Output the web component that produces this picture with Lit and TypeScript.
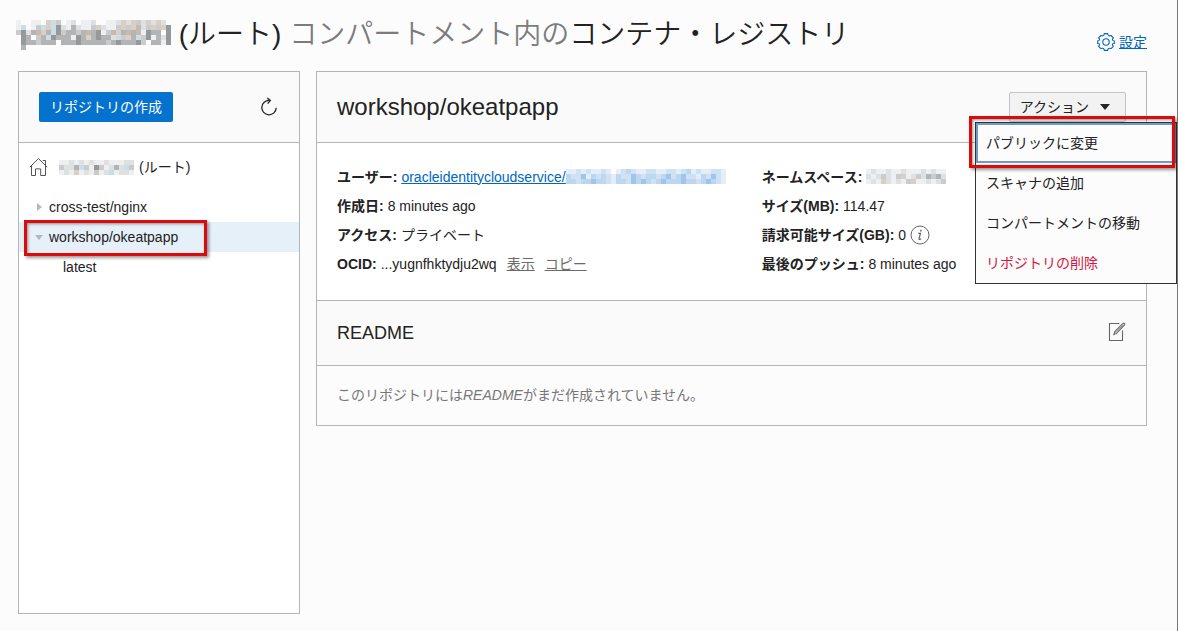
import { LitElement, html, css, svg } from "lit";
import { customElement, property, state } from "lit/decorators.js";

const TINTS: Record<string, string> = {
  "1": "#eeeff0", "2": "#dfe0e1", "3": "#cacbcd", "4": "#b2b4b6", "5": "#96999c",
  b: "#cddde6", t: "#dacfc5", p: "#c6b9ae",
  k: "#e3eef9", l: "#cfe1f4", m: "#bdd7f0", n: "#a0c5e9",
};

/** A pixelated block that stands in for a private value. */
@customElement("masked-text")
export class MaskedText extends LitElement {
  @property({ attribute: false }) rows: string[] = [];

  static styles = css`
    :host { display: inline-block; vertical-align: middle; line-height: 0; }
  `;

  render() {
    const cell = 5;
    const w = Math.max(...this.rows.map((r) => r.length)) * cell;
    const h = this.rows.length * cell;
    return html`<svg width=${w} height=${h} viewBox="0 0 ${w} ${h}" role="img" aria-label="非表示" shape-rendering="crispEdges">
      ${this.rows.map((row, y) =>
        [...row].map((c, x) =>
          TINTS[c] ? svg`<rect x=${x * cell} y=${y * cell} width=${cell} height=${cell} fill=${TINTS[c]}></rect>` : null
        )
      )}
    </svg>`;
  }
}

const TITLE_MASK = [
  "1..11.tb3.12.112..112t2t32t2t2.",
  "1b.13btb52142113t2113t3tp23t3t5",
  "3524pt4b534434p4513pt4p4p1544.5",
  ".54.34b5444154t45442b3t4b351425",
  ".5443444.44454444434544453.4415",
  ".4.............................",
];
const TREE_MASK = ["112121211211122", "3224b31531242b3", "121t121312b1221"];
const LINK_MASK = [
  "kklklkklk.klmlkkllkkllklmklkkllk",
  "mllnkmlmlkmllnmlmmlmnlmnllkmlnlk",
  "mmlmmnmmlkmmlnmnmlmnmmmnmmlmnmlk",
];
const NS_MASK = ["1211211211121211", "2123213t12324342", "121t21213t112123"];

@customElement("app-root")
export class AppRoot extends LitElement {
  @state() private menuOpen = true;

  static styles = css`
    :host {
      display: block;
      font: 14px/20px "Liberation Sans", "Noto Sans CJK JP", sans-serif;
      color: #222;
    }
    * { box-sizing: border-box; }
    h1, h2, h3, p, ul, dl, dd { margin: 0; padding: 0; }
    ul { list-style: none; }
    button { font: inherit; color: inherit; cursor: pointer; }
    svg { display: block; flex: none; }
    .page {
      min-height: 100vh;
      display: flex;
      flex-direction: column;
      gap: 16px;
      padding: 15px 30px 17px 18px;
      background: #fcfcfc;
      border-right: 1px solid #777;
      overflow: hidden;
    }
    .top { display: flex; justify-content: space-between; align-items: flex-end; }
    .title { font-size: 28px; line-height: 40px; font-weight: 350; margin-left: -2px; }
    .title masked-text { margin-bottom: 4px; }
    .scope { color: #7c7c7c; }
    .settings { display: flex; align-items: center; gap: 4px; line-height: 26px; color: #0066c0; }
    .settings span { text-decoration: underline; }
    .columns { flex: 1; display: grid; grid-template-columns: 282px minmax(0, 1fr); gap: 16px; }
    .panel { border: 1px solid #b3b5b9; background: #fff; }
    .bar {
      display: flex;
      justify-content: space-between;
      align-items: center;
      padding: 20px;
      background: #fafafa;
      border-bottom: 1px solid #b3b5b9;
    }
    .create {
      height: 30px;
      padding: 0 11px;
      border: 0;
      border-radius: 2px;
      background: #0572ce;
      color: #fff;
    }
    .icon { display: block; padding: 0; border: 0; background: none; }
    .home { display: flex; align-items: center; padding: 14px 10px 15px; gap: 11px; }
    .home span { display: flex; align-items: center; gap: 5px; }
    .node {
      position: relative;
      display: flex;
      align-items: center;
      gap: 6px;
      width: 100%;
      height: 30px;
      padding: 0 16px;
      border: 0;
      background: none;
      text-align: left;
    }
    .current { background: #e6f0f9; }
    .leaf { padding-left: 44px; }
    .mark {
      position: absolute;
      border: 3px solid #dc0a0a;
      box-shadow: 2px 2px 3px #0006, inset 1px 1px 3px #0006;
      pointer-events: none;
    }
    .mark-node { inset: -2px 92px -4px 5px; }
    .detail { align-self: start; }
    .name { font-size: 24px; line-height: 30px; font-weight: 400; }
    .facts { display: grid; grid-template-columns: 10fr 9fr; gap: 20px; padding: 19px 20px 22px; }
    .fact { display: flex; align-items: center; gap: 4px; height: 29px; white-space: nowrap; }
    .fact dt { font-weight: 700; }
    .fact dd { display: flex; align-items: center; gap: 4px; }
    .fact a { color: #0066c0; }
    .fact .user { display: flex; align-items: center; }
    .fact .ocid { gap: 10px; }
    .fact .minor { color: #6b6b6b; }
    .actions { position: relative; }
    .toggle {
      display: flex;
      align-items: center;
      gap: 11px;
      height: 30px;
      padding: 0 15px 0 10px;
      border: 1px solid #c4c4c4;
      border-radius: 2px;
      background: #f2f2f2;
    }
    .menu {
      position: absolute;
      top: 30px;
      right: -51px;
      width: 202px;
      border: 1px solid #333;
      background: #fcfcfc;
    }
    .menu li { position: relative; }
    .item {
      display: block;
      width: 100%;
      height: 40px;
      padding: 0 10px;
      border: 0;
      background: none;
      text-align: left;
    }
    .focused { box-shadow: inset 0 0 0 2px #6f9cc6; }
    .danger { color: #d4183f; }
    .mark-item { inset: -7px 1px -5px -7px; }
    .readme { border-top: 1px solid #b3b5b9; }
    .readme h3 { font-size: 18px; line-height: 24px; font-weight: 400; }
    .empty { padding: 19px 20px 20px; background: #fcfcfc; color: #777; }
  `;

  private fact(label: string, value: unknown, cls = "") {
    return html`<div class="fact"><dt>${label}</dt><dd class=${cls}>${value}</dd></div>`;
  }

  render() {
    return html`
      <div class="page">
        <header class="top">
          <h1 class="title"><masked-text .rows=${TITLE_MASK}></masked-text> (ルート) <span class="scope">コンパートメント内の</span>コンテナ・レジストリ</h1>
          <a class="settings" href="#settings">
            <svg width="18" height="18" viewBox="0 0 18 18" fill="none" stroke="currentColor" stroke-width="1.1" stroke-linejoin="round">
              <path d="M6.4 2.6Q7.1 2.3 7.3.6h3.4q.2 1.7.9 2 1 .6 2.5-.1l2.3 2.4q-1.2 1.2-1 2.1.1.6 1.9.7v2.8q-1.7.1-1.9.7-.2.9 1 2.1l-2.3 2.3q-1.5-.7-2.5-.1-.7.3-.9 1.9H7.3q-.2-1.6-.9-1.9-1-.6-2.5.1L1.6 13.3q1.2-1.2 1-2.1-.1-.6-1.9-.7V7.700q1.800-.1 1.900-.7.2-.9-1-2.100l2.300-2.400q1.500.7 2.500.1z"/>
              <circle cx="9" cy="9" r="3.2"/>
            </svg><span>設定</span>
          </a>
        </header>

        <div class="columns">
          <nav class="panel" aria-label="リポジトリ">
            <div class="bar">
              <button class="create">リポジトリの作成</button>
              <button class="icon" aria-label="更新">
                <svg width="20" height="20" viewBox="0 0 20 20" fill="none" stroke="#222" stroke-width="1.3">
                  <path d="M10.5 3.4A7.2 7.2 0 1 0 17.2 10.8"/><path d="M8.1.9l3.3 2.5-2.7 3.3"/>
                </svg>
              </button>
            </div>
            <div class="home">
              <svg width="19" height="20" viewBox="0 0 19 20" fill="none" stroke="#555" stroke-width="1">
                <path d="M.8 10.2 9.5 1.6l8.7 8.6M2.5 8.7v9.8h4v-6.6h5.2v6.6h4.8V8.7M13.8 3.5h2.7v4.8"/>
              </svg>
              <span><masked-text .rows=${TREE_MASK}></masked-text>(ルート)</span>
            </div>
            <ul>
              <li><button class="node" aria-expanded="false">
                <svg width="8" height="8" viewBox="0 0 8 8" fill="#b8b8b8"><path d="M2 0l5 4-5 4z"/></svg>cross-test/nginx
              </button></li>
              <li><button class="node current" aria-expanded="true">
                <svg width="8" height="8" viewBox="0 0 8 8" fill="#b0b8be"><path d="M0 2h8L4 7z"/></svg>workshop/okeatpapp
                <span class="mark mark-node"></span>
              </button>
                <ul><li><button class="node leaf">latest</button></li></ul>
              </li>
            </ul>
          </nav>

          <main class="panel detail">
            <div class="bar">
              <h2 class="name">workshop/okeatpapp</h2>
              <div class="actions">
                <button class="toggle" aria-haspopup="menu" aria-expanded=${this.menuOpen} @click=${() => (this.menuOpen = !this.menuOpen)}>
                  アクション
                  <svg width="10" height="6" viewBox="0 0 10 6" fill="#222"><path d="M0 0h10L5 6z"/></svg>
                </button>
                ${this.menuOpen
                  ? html`<ul class="menu">
                      <li><button class="item focused">パブリックに変更</button><span class="mark mark-item"></span></li>
                      <li><button class="item">スキャナの追加</button></li>
                      <li><button class="item">コンパートメントの移動</button></li>
                      <li><button class="item danger">リポジトリの削除</button></li>
                    </ul>`
                  : null}
              </div>
            </div>
            <div class="facts">
              <dl>
                ${this.fact("ユーザー:", html`<a class="user" href="#user"><u>oracleidentitycloudservice/</u><masked-text .rows=${LINK_MASK}></masked-text></a>`)}
                ${this.fact("作成日:", "8 minutes ago")}
                ${this.fact("アクセス:", "プライベート")}
                ${this.fact("OCID:", html`<span>...yugnfhktydju2wq</span><a class="minor" href="#show">表示</a><a class="minor" href="#copy">コピー</a>`, "ocid")}
              </dl>
              <dl>
                ${this.fact("ネームスペース:", html`<masked-text .rows=${NS_MASK}></masked-text>`)}
                ${this.fact("サイズ(MB):", "114.47")}
                ${this.fact("請求可能サイズ(GB):", html`0
                  <svg width="20" height="20" viewBox="0 0 20 20" fill="none" stroke="#666">
                    <circle cx="10" cy="10" r="9"/><path d="M8.2 8.4h2.3L9 13.6q-.2 1 .8.8l1.3-.7" stroke-width="1.2"/><circle cx="10.8" cy="5.7" r=".9" fill="#666" stroke="none"/>
                  </svg>`)}
                ${this.fact("最後のプッシュ:", "8 minutes ago")}
              </dl>
            </div>
            <section class="readme">
              <div class="bar">
                <h3>README</h3>
                <button class="icon" aria-label="READMEの編集">
                  <svg width="18" height="22" viewBox="0 0 18 22" fill="none" stroke="#666" stroke-width="1.1">
                    <path d="M11.5 1.5H1.5v17h13V8.5"/><path d="M6 12.5l.8-2.9L15 1.4q.9-.6 1.5 0t0 1.6L8.6 11.4z"/><path d="M7.6 10.7l7.6-7.8" stroke-width=".7"/>
                  </svg>
                </button>
              </div>
              <p class="empty">このリポジトリには<em>README</em>がまだ作成されていません。</p>
            </section>
          </main>
        </div>
      </div>
    `;
  }
}
